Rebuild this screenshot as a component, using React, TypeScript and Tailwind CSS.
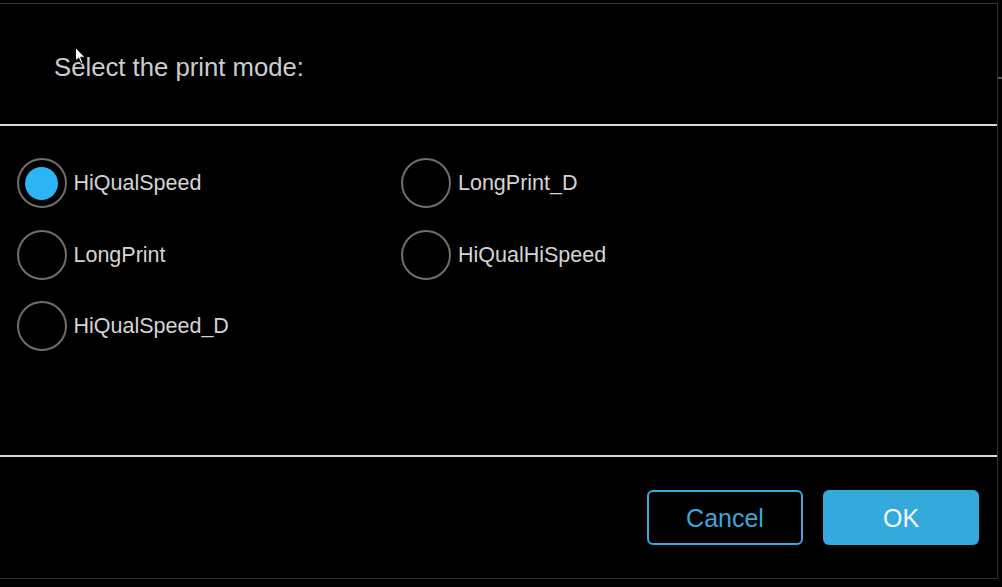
import React, { useState } from 'react'

const modes = ['HiQualSpeed', 'LongPrint_D', 'LongPrint', 'HiQualHiSpeed', 'HiQualSpeed_D']

function Radio({ label, checked, onClick }: { label: string; checked: boolean; onClick: () => void }) {
  return (
    <button onClick={onClick} className="flex items-center h-[50px] text-left">
      <span className="w-[50px] h-[50px] rounded-full border-2 border-[#6e6e6e] flex items-center justify-center shrink-0">
        {checked && <span className="w-[33px] h-[33px] rounded-full bg-[#2bb5f5]" />}
      </span>
      <span className="ml-[7px] text-[21.5px] leading-[26px] text-[#d4d4d4]">{label}</span>
    </button>
  )
}

export default function App() {
  const [mode, setMode] = useState('HiQualSpeed')

  return (
    <div className="relative w-[1002px] h-[587px] bg-black overflow-hidden" style={{ fontFamily: '"Liberation Sans", Arial, sans-serif' }}>
      <div className="mt-[3px] w-[998px] h-[576px] border-t border-r border-b border-[#333] flex flex-col">
        {/* header */}
        <div className="h-[120px] pl-[54px] pt-[48px]">
          <div className="text-[25.7px] leading-[30px] text-[#c9cdd1]">Select the print mode:</div>
        </div>
        <div className="h-[2px] bg-[#d8d8d8]" />

        {/* options */}
        <div className="h-[329px] pl-[16.5px] pt-[32px]">
          <div className="grid grid-cols-[384.5px_384px] gap-y-[21.5px]">
            {modes.map(m => (
              <Radio key={m} label={m} checked={mode === m} onClick={() => setMode(m)} />
            ))}
          </div>
        </div>
        <div className="h-[2px] bg-[#d8d8d8]" />

        {/* footer */}
        <div className="flex-1 flex justify-end items-start pt-[33px] pr-[18px] gap-[20px]">
          <button className="w-[156px] h-[55px] pt-[2px] rounded-[6px] border-2 border-[#3aa8dc] text-[#3aa8dc] text-[25px]">Cancel</button>
          <button className="w-[156px] h-[55px] pt-[2px] rounded-[6px] bg-[#34a9dc] text-[#f4f8fb] text-[25px]">OK</button>
        </div>
      </div>

      {/* edge tick */}
      <div className="absolute left-[998px] top-[77px] w-[4px] h-[2px] bg-[#555]" />

      {/* mouse cursor */}
      <svg className="absolute left-[75px] top-[47px]" width="12" height="18" viewBox="0 0 12 18">
        <path d="M0.5 0.5 L0.5 14 L3.6 11 L6 16.5 L8 15.6 L5.7 10.3 L10 10.3 Z" fill="#fff" stroke="#000" strokeWidth="1" />
      </svg>
    </div>
  )
}
